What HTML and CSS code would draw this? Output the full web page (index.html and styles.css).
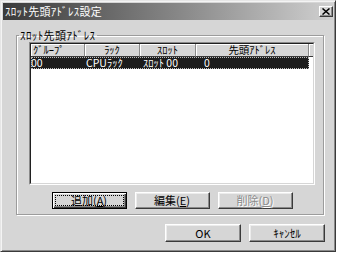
FILE: index.html
```html
<!DOCTYPE html>
<html lang="ja">
<head>
<meta charset="utf-8">
<link rel="stylesheet" href="styles.css">
</head>
<body>
<div class="window">
  <div class="titlebar">
    <span class="title">ｽﾛｯﾄ先頭ｱﾄﾞﾚｽ設定</span>
    <span class="close"><svg width="8" height="7" viewBox="0 0 8 7"><path d="M0.5 0.5 L7.5 6.5 M7.5 0.5 L0.5 6.5" stroke="#000" stroke-width="1.5" fill="none"/></svg></span>
  </div>
  <fieldset class="group">
    <legend>ｽﾛｯﾄ先頭ｱﾄﾞﾚｽ</legend>
    <div class="group-body">
      <div class="list">
        <div class="list-inner">
          <div class="list-head">
            <div class="hcell left">ｸﾞﾙｰﾌﾟ</div>
            <div class="hcell">ﾗｯｸ</div>
            <div class="hcell">ｽﾛｯﾄ</div>
            <div class="hcell">先頭ｱﾄﾞﾚｽ</div>
            <div class="hcell filler"></div>
          </div>
          <div class="list-row selected">
            <span class="c1">00</span>
            <span class="c2">CPUﾗｯｸ</span>
            <span class="c3">ｽﾛｯﾄ 00</span>
            <span class="c4">0</span>
          </div>
        </div>
      </div>
      <div class="btn-row">
        <button class="btn default">追加(<u>A</u>)</button>
        <button class="btn">編集(<u>E</u>)</button>
        <button class="btn disabled">削除(<u>D</u>)</button>
      </div>
    </div>
  </fieldset>
  <div class="footer">
    <button class="btn tall">OK</button>
    <button class="btn tall">ｷｬﾝｾﾙ</button>
  </div>
</div>
</body>
</html>
```

FILE: styles.css
```css
* { box-sizing: border-box; }
html, body { margin: 0; padding: 0; background: #ffffff; }
body {
  font-family: "Noto Sans CJK JP", "Liberation Sans", sans-serif;
  font-size: 11px;
  color: #000;
}
.window {
  width: 336px;
  height: 252px;
  background: #d6d6d6;
  border: 1px solid;
  border-color: #e6e6e6 #3a3a3a #3a3a3a #e6e6e6;
  box-shadow: inset 1px 1px 0 #f4f4f4, inset -1px -1px 0 #8a8a8a;
  padding: 2px;
  display: flex;
  flex-direction: column;
}
.titlebar {
  height: 17px;
  background: linear-gradient(to right, #3a3a3a 0%, #8a8a8a 55%, #d0d0d0 100%);
  display: flex;
  align-items: center;
  justify-content: space-between;
  padding: 0 0 0 2px;
  color: #ffffff;
  flex: none;
}
.title {
  font-size: 11px;
  line-height: 13px;
  letter-spacing: 0.3px;
}
.close {
  width: 14px;
  height: 11px;
  background: #d6d6d6;
  border: 1px solid;
  border-color: #ffffff #3a3a3a #3a3a3a #ffffff;
  box-shadow: inset -1px -1px 0 #8a8a8a;
  display: flex;
  align-items: center;
  justify-content: center;
}
.close svg { display: block; }
.group {
  margin: 8px 9px 0 13px;
  padding: 0 0 0 2px;
  border: 1px solid #9c9c9c;
  box-shadow: 1px 1px 0 #ffffff, inset 1px 1px 0 #ffffff;
  min-inline-size: 0;
  flex: none;
}
.group legend {
  padding: 0 1px;
  line-height: 14px;
  font-size: 11px;
  letter-spacing: 0.4px;
}
.group-body {
  padding: 0 8px 5px 10px;
}
.list {
  height: 143px;
  border: 1px solid;
  border-color: #8a8a8a #ffffff #ffffff #8a8a8a;
}
.list-inner {
  height: 100%;
  border: 1px solid;
  border-color: #202020 #d6d6d6 #d6d6d6 #202020;
  background: #ffffff;
}
.list-head {
  display: grid;
  grid-template-columns: 54px 55px 56px 113px 1fr;
  height: 13px;
}
.hcell {
  background: #d6d6d6;
  border-right: 1px solid #8a8a8a;
  border-bottom: 1px solid #3a3a3a;
  box-shadow: inset 1px 1px 0 #ffffff;
  font-size: 10.5px;
  line-height: 12px;
  text-align: center;
  white-space: nowrap;
}
.hcell.left { text-align: left; padding-left: 2px; }
.hcell.filler { border-right: none; }
.list-row {
  display: grid;
  grid-template-columns: 54px 55px 56px 113px;
  width: 278px;
  height: 12px;
  font-size: 10.5px;
  line-height: 12px;
  white-space: nowrap;
}
.list-row.selected {
  background: #1c1c1c;
  color: #ffffff;
  outline: 1px dotted #bdbdbd;
  outline-offset: -1px;
}
.c1 { padding-left: 0; }
.c2 { padding-left: 1px; }
.c3 { padding-left: 3px; }
.c4 { padding-left: 8px; }
.btn-row {
  display: flex;
  justify-content: center;
  gap: 8px;
  margin-top: 7px;
}
.btn {
  width: 75px;
  height: 17px;
  padding: 0;
  margin: 0;
  font-family: "Noto Sans CJK JP", "Liberation Sans", sans-serif;
  font-size: 11px;
  line-height: 13px;
  color: #000;
  background: #d6d6d6;
  border: 1px solid;
  border-color: #ffffff #3a3a3a #3a3a3a #ffffff;
  box-shadow: inset -1px -1px 0 #8a8a8a, inset 1px 1px 0 #ececec;
  border-radius: 0;
}
.btn u { text-underline-offset: 1px; }
.btn.default {
  border: 1px solid #000;
  box-shadow: inset 1px 1px 0 #ffffff, inset -1px -1px 0 #3a3a3a, inset -2px -2px 0 #8a8a8a;
  outline: 1px dotted #000;
  outline-offset: -4px;
}
.btn.disabled {
  color: #8a8a8a;
  text-shadow: 1px 1px 0 #ffffff;
}
.footer {
  display: flex;
  justify-content: flex-end;
  gap: 8px;
  margin-top: 9px;
  padding-right: 8px;
}
.btn.tall {
  width: 76px;
  height: 18px;
}
```
